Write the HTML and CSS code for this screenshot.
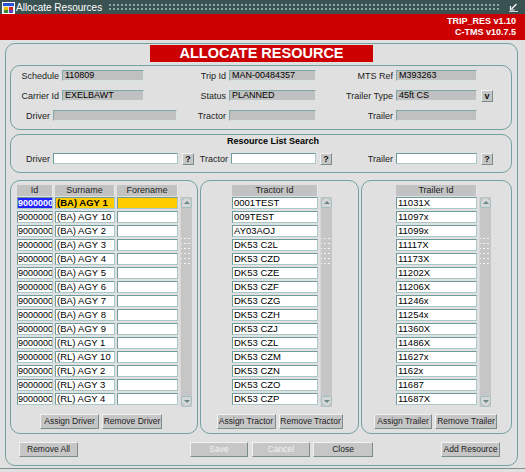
FILE: index.html
```html
<!DOCTYPE html>
<html lang="en">
  <head>
    <meta charset="UTF-8" />
    <meta name="viewport" content="width=device-width, initial-scale=1.0" />
    <title>Allocate Resources</title>
    <link rel="stylesheet" href="styles.css">
  </head>
  <body>
    <div class="titlebar">
      <svg class="appicon" width="13" height="13" viewBox="0 0 13 13">
        <rect x="0.5" y="1.5" width="12" height="11" fill="#d8e4f0" stroke="#ffffff" />
        <rect x="1" y="2" width="11" height="3" fill="#2a4fd0" />
        <rect x="2" y="6" width="4" height="3" fill="#f0c000" />
        <rect x="7" y="6" width="4" height="3" fill="#d02020" />
        <rect x="2" y="9" width="4" height="3" fill="#3a8a3a" />
        <rect x="7" y="9" width="4" height="3" fill="#6040c0" />
      </svg>
      <span class="title">Allocate Resources</span>
      <div class="grip"></div>
      <svg class="restore" width="9" height="9" viewBox="0 0 9 9">
        <path d="M7.5 1 L2.5 6" stroke="#fff" stroke-width="1.2" />
        <path d="M1.5 3 V7 H5.5" stroke="#fff" stroke-width="1.2" fill="none" />
        <path d="M0 8.5 H9" stroke="#cfd8d8" stroke-width="1" />
      </svg>
    </div>

    <div class="redbar">
      <div>TRIP_RES v1.10</div>
      <div>C-TMS v10.7.5</div>
    </div>

    <div class="main">
      <div class="banner">ALLOCATE RESOURCE</div>

      <div class="panel info">
        <div class="row">
          <span class="lbl l48">Schedule</span>
          <div class="fld grey f82">110809</div>
          <span class="lbl l82">Trip Id</span>
          <div class="fld grey f87">MAN-00484357</div>
          <span class="lbl l77">MTS Ref</span>
          <div class="fld grey f81">M393263</div>
        </div>
        <div class="row">
          <span class="lbl l48">Carrier Id</span>
          <div class="fld grey f82">EXELBAWT</div>
          <span class="lbl l82">Status</span>
          <div class="fld grey f87">PLANNED</div>
          <span class="lbl l77">Trailer Type</span>
          <div class="fld grey f81">45ft CS</div>
          <div class="sbtn bold">v</div>
        </div>
        <div class="row">
          <span class="lbl l39">Driver</span>
          <div class="fld grey f124"></div>
          <span class="lbl l49">Tractor</span>
          <div class="fld grey f87"></div>
          <span class="lbl l77">Trailer</span>
          <div class="fld grey f81"></div>
        </div>
      </div>

      <div class="panel search">
        <div class="search-title">Resource List Search</div>
        <div class="row">
          <span class="lbl l39">Driver</span>
          <div class="fld f125"></div>
          <div class="sbtn bold">?</div>
          <span class="lbl l34">Tractor</span>
          <div class="fld f85"></div>
          <div class="sbtn bold">?</div>
          <span class="lbl l61">Trailer</span>
          <div class="fld f81"></div>
          <div class="sbtn bold">?</div>
        </div>
      </div>

      <div class="lists">
        <div class="panel lp drivers">
          <div class="list">
            <div class="cols">
              <div class="lrow">
                <div class="hdr c-id">Id</div>
                <div class="hdr c-sur">Surname</div>
                <div class="hdr c-fore">Forename</div>
              </div>
              <div class="lrow"><div class="fld c-id sel-id">9000000</div><div class="fld c-sur sel">(BA) AGY 1</div><div class="fld c-fore sel"></div></div>
              <div class="lrow"><div class="fld c-id">9000000</div><div class="fld c-sur">(BA) AGY 10</div><div class="fld c-fore"></div></div>
              <div class="lrow"><div class="fld c-id">9000000</div><div class="fld c-sur">(BA) AGY 2</div><div class="fld c-fore"></div></div>
              <div class="lrow"><div class="fld c-id">9000000</div><div class="fld c-sur">(BA) AGY 3</div><div class="fld c-fore"></div></div>
              <div class="lrow"><div class="fld c-id">9000000</div><div class="fld c-sur">(BA) AGY 4</div><div class="fld c-fore"></div></div>
              <div class="lrow"><div class="fld c-id">9000000</div><div class="fld c-sur">(BA) AGY 5</div><div class="fld c-fore"></div></div>
              <div class="lrow"><div class="fld c-id">9000000</div><div class="fld c-sur">(BA) AGY 6</div><div class="fld c-fore"></div></div>
              <div class="lrow"><div class="fld c-id">9000000</div><div class="fld c-sur">(BA) AGY 7</div><div class="fld c-fore"></div></div>
              <div class="lrow"><div class="fld c-id">9000000</div><div class="fld c-sur">(BA) AGY 8</div><div class="fld c-fore"></div></div>
              <div class="lrow"><div class="fld c-id">9000000</div><div class="fld c-sur">(BA) AGY 9</div><div class="fld c-fore"></div></div>
              <div class="lrow"><div class="fld c-id">9000000</div><div class="fld c-sur">(RL) AGY 1</div><div class="fld c-fore"></div></div>
              <div class="lrow"><div class="fld c-id">9000000</div><div class="fld c-sur">(RL) AGY 10</div><div class="fld c-fore"></div></div>
              <div class="lrow"><div class="fld c-id">9000000</div><div class="fld c-sur">(RL) AGY 2</div><div class="fld c-fore"></div></div>
              <div class="lrow"><div class="fld c-id">9000000</div><div class="fld c-sur">(RL) AGY 3</div><div class="fld c-fore"></div></div>
              <div class="lrow"><div class="fld c-id">9000000</div><div class="fld c-sur">(RL) AGY 4</div><div class="fld c-fore"></div></div>
            </div>
            <div class="scroll">
              <div class="sb-up"></div>
              <div class="sb-grip"></div>
              <div class="sb-down"></div>
            </div>
          </div>
          <div class="btns">
            <div class="btn b59">Assign Driver</div>
            <div class="btn b60">Remove Driver</div>
          </div>
        </div>

        <div class="panel lp tractors">
          <div class="list">
            <div class="cols">
              <div class="lrow"><div class="hdr c-trac">Tractor Id</div></div>
              <div class="lrow"><div class="fld c-trac">0001TEST</div></div>
              <div class="lrow"><div class="fld c-trac">009TEST</div></div>
              <div class="lrow"><div class="fld c-trac">AY03AOJ</div></div>
              <div class="lrow"><div class="fld c-trac">DK53 C2L</div></div>
              <div class="lrow"><div class="fld c-trac">DK53 CZD</div></div>
              <div class="lrow"><div class="fld c-trac">DK53 CZE</div></div>
              <div class="lrow"><div class="fld c-trac">DK53 CZF</div></div>
              <div class="lrow"><div class="fld c-trac">DK53 CZG</div></div>
              <div class="lrow"><div class="fld c-trac">DK53 CZH</div></div>
              <div class="lrow"><div class="fld c-trac">DK53 CZJ</div></div>
              <div class="lrow"><div class="fld c-trac">DK53 CZL</div></div>
              <div class="lrow"><div class="fld c-trac">DK53 CZM</div></div>
              <div class="lrow"><div class="fld c-trac">DK53 CZN</div></div>
              <div class="lrow"><div class="fld c-trac">DK53 CZO</div></div>
              <div class="lrow"><div class="fld c-trac">DK53 CZP</div></div>
            </div>
            <div class="scroll">
              <div class="sb-up"></div>
              <div class="sb-grip"></div>
              <div class="sb-down"></div>
            </div>
          </div>
          <div class="btns">
            <div class="btn b59">Assign Tractor</div>
            <div class="btn b64">Remove Tractor</div>
          </div>
        </div>

        <div class="panel lp trailers">
          <div class="list">
            <div class="cols">
              <div class="lrow"><div class="hdr c-trl">Trailer Id</div></div>
              <div class="lrow"><div class="fld c-trl">11031X</div></div>
              <div class="lrow"><div class="fld c-trl">11097x</div></div>
              <div class="lrow"><div class="fld c-trl">11099x</div></div>
              <div class="lrow"><div class="fld c-trl">11117X</div></div>
              <div class="lrow"><div class="fld c-trl">11173X</div></div>
              <div class="lrow"><div class="fld c-trl">11202X</div></div>
              <div class="lrow"><div class="fld c-trl">11206X</div></div>
              <div class="lrow"><div class="fld c-trl">11246x</div></div>
              <div class="lrow"><div class="fld c-trl">11254x</div></div>
              <div class="lrow"><div class="fld c-trl">11360X</div></div>
              <div class="lrow"><div class="fld c-trl">11486X</div></div>
              <div class="lrow"><div class="fld c-trl">11627x</div></div>
              <div class="lrow"><div class="fld c-trl">1162x</div></div>
              <div class="lrow"><div class="fld c-trl">11687</div></div>
              <div class="lrow"><div class="fld c-trl">11687X</div></div>
            </div>
            <div class="scroll">
              <div class="sb-up"></div>
              <div class="sb-grip"></div>
              <div class="sb-down"></div>
            </div>
          </div>
          <div class="btns">
            <div class="btn b58">Assign Trailer</div>
            <div class="btn b62">Remove Trailer</div>
          </div>
        </div>
      </div>

      <div class="bottom">
        <div class="btn b59">Remove All</div>
        <div class="btn b58 off save">Save</div>
        <div class="btn b58 off cancel">Cancel</div>
        <div class="btn b60 close">Close</div>
        <div class="btn b59 add">Add Resource</div>
      </div>
    </div>
    <div class="footer"></div>
  </body>
</html>
```

FILE: styles.css
```css
* {
  box-sizing: border-box;
}
body {
  margin: 0;
  width: 525px;
  height: 472px;
  overflow: hidden;
  background-color: #e0e0e0;
  font-family: "Liberation Sans", Arial, sans-serif;
  font-size: 9px;
  color: #000;
}
.bold {
  font-weight: bold;
}

/* window chrome */
.titlebar {
  height: 14px;
  display: flex;
  align-items: center;
  background-color: #3a5252;
}
.appicon {
  margin-left: 2px;
}
.title {
  margin-left: 1px;
  color: #fff;
  font-size: 10px;
}
.grip {
  flex: 1;
  height: 8px;
  margin: 0 8px 0 6px;
  background-image: radial-gradient(circle, #8fa8a8 0.7px, transparent 1px);
  background-size: 4px 4px;
}
.restore {
  margin-right: 7px;
}
.redbar {
  height: 26px;
  padding: 2px 9px 0 0;
  background-color: #cc0000;
  color: #fff;
  font-weight: bold;
  font-size: 9px;
  line-height: 11px;
  text-align: right;
}

/* main frame */
.main {
  margin: 3px 0 0 5px;
  width: 513px;
  height: 423px;
  border: 1px solid #74a0a0;
  border-radius: 10px;
}
.banner {
  width: 223px;
  height: 17px;
  margin: 1px auto 0;
  background-color: #cc0000;
  color: #fff;
  font-weight: bold;
  font-size: 14.5px;
  line-height: 17px;
  text-align: center;
}
.panel {
  border: 1px solid #74a0a0;
  border-radius: 10px;
}
.info {
  width: 502px;
  height: 65px;
  margin: 3px 0 0 4px;
  padding-top: 4px;
}
.search {
  width: 502px;
  height: 39px;
  margin: 4px 0 0 4px;
  padding-top: 1px;
}
.search-title {
  padding-left: 216px;
  font-weight: bold;
  line-height: 10px;
  margin-bottom: 7px;
}
.row {
  display: flex;
  align-items: center;
  height: 11px;
  margin-bottom: 9px;
}
.search .row {
  margin-bottom: 0;
}
.lbl {
  margin-right: 3px;
  text-align: right;
  color: #222;
}
.l34 { width: 34px; }
.l39 { width: 39px; }
.l48 { width: 48px; }
.l49 { width: 49px; }
.l61 { width: 61px; }
.l77 { width: 77px; }
.l82 { width: 82px; }
.f81 { width: 81px; }
.f82 { width: 82px; }
.f85 { width: 85px; }
.f87 { width: 87px; }
.f124 { width: 124px; }
.f125 { width: 125px; }

.fld {
  height: 11px;
  padding-left: 2px;
  background-color: #fff;
  border: 1px solid #a9c8c8;
  border-top-color: #6e9c9c;
  border-left-color: #6e9c9c;
  line-height: 9px;
  white-space: nowrap;
  overflow: hidden;
}
.fld.grey {
  background-color: #c0c0c0;
  border-color: #7fa8a8 #d8e4e4 #d8e4e4 #7fa8a8;
}
.sbtn {
  width: 12px;
  height: 12px;
  margin-left: 4px;
  background-color: #c6c6c6;
  border: 1px solid;
  border-color: #f2f2f2 #7c8c8c #7c8c8c #f2f2f2;
  color: #111;
  line-height: 10px;
  text-align: center;
}

/* list panels */
.lists {
  display: flex;
  gap: 2px;
  margin: 7px 0 0 4px;
}
.lp {
  height: 254px;
  padding-top: 4px;
}
.drivers {
  width: 188px;
  padding-left: 6px;
}
.tractors {
  width: 159px;
  padding-left: 31px;
}
.trailers {
  width: 151px;
  padding-left: 34px;
}
.list {
  display: flex;
}
.lrow {
  display: flex;
  gap: 2px;
  margin-bottom: 2px;
}
.lrow:first-child {
  margin-bottom: 1px;
}
.lrow .fld {
  height: 12px;
  line-height: 10px;
  font-size: 9.5px;
  padding-left: 1px;
}
.lrow .c-id {
  font-size: 9px;
  padding-left: 0;
}
.hdr {
  height: 11px;
  background-color: #c2c2c2;
  border-right: 1px solid #e8e8e8;
  color: #222;
  line-height: 11px;
  text-align: center;
}
.c-id { width: 36px; }
.c-sur { width: 60px; }
.c-fore { width: 61px; }
.c-trac { width: 86px; }
.c-trl { width: 81px; }
.sel-id.fld {
  background-color: #2222ff;
  color: #fff;
  font-weight: bold;
}
.sel.fld {
  background-color: #ffcc00;
  font-weight: bold;
}

.scroll {
  width: 12px;
  height: 210px;
  margin: 12px 0 0 2px;
  display: flex;
  flex-direction: column;
  background-color: #c6c6c6;
  border-left: 1px solid #d6d6d6;
}
.sb-up,
.sb-down {
  height: 11px;
  display: flex;
  align-items: center;
  justify-content: center;
  border: 1px solid #9fc0c0;
  background-color: #d6d6d6;
}
.sb-up {
  border-radius: 6px 6px 2px 2px;
}
.sb-down {
  margin-top: auto;
  border-radius: 2px 2px 6px 6px;
}
.sb-up::after,
.sb-down::after {
  content: "";
  border-left: 3px solid transparent;
  border-right: 3px solid transparent;
}
.sb-up::after {
  border-bottom: 3px solid #6c8686;
}
.sb-down::after {
  border-top: 3px solid #6c8686;
}
.sb-grip {
  height: 28px;
  margin-top: 28px;
  background-image: radial-gradient(circle, #f4f4f4 0.8px, transparent 1.1px);
  background-size: 4px 5px;
  background-position: 2px 0;
}

.btns {
  display: flex;
  justify-content: center;
  gap: 3px;
  margin-top: 7px;
}
.drivers .btns {
  margin-left: -6px;
  padding-right: 6px;
}
.tractors .btns {
  margin-left: -31px;
}
.trailers .btns {
  margin-left: -34px;
  padding-right: 2px;
}
.btn {
  height: 15px;
  background-color: #c6c6c6;
  border: 1px solid;
  border-color: #f2f2f2 #7c8c8c #7c8c8c #f2f2f2;
  color: #222;
  font-size: 8.5px;
  line-height: 13px;
  text-align: center;
  white-space: nowrap;
}
.b58 { width: 58px; }
.b59 { width: 59px; }
.b60 { width: 60px; }
.b62 { width: 62px; }
.b64 { width: 64px; }

/* bottom buttons */
.bottom {
  display: flex;
  margin-top: 8px;
  padding-left: 13px;
}
.off {
  color: #f4f4f4;
}
.save {
  margin-left: 112px;
}
.cancel {
  margin-left: 4px;
}
.close {
  margin-left: 3px;
}
.add {
  margin-left: 68px;
}
.footer {
  margin-top: 2px;
  border-top: 1px solid #80908f;
}
```
